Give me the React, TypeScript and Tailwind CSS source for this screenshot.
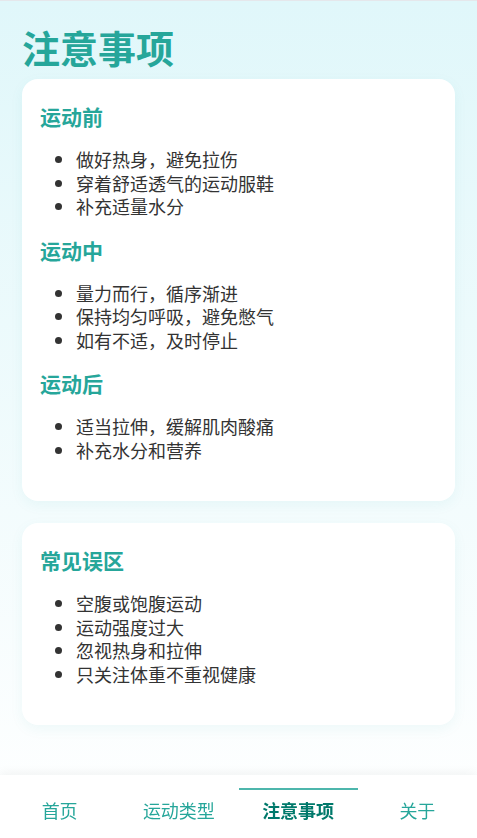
const sections = [
  {
    title: "运动前",
    items: ["做好热身，避免拉伤", "穿着舒适透气的运动服鞋", "补充适量水分"],
  },
  {
    title: "运动中",
    items: ["量力而行，循序渐进", "保持均匀呼吸，避免憋气", "如有不适，及时停止"],
  },
  {
    title: "运动后",
    items: ["适当拉伸，缓解肌肉酸痛", "补充水分和营养"],
  },
]

const mistakes = ["空腹或饱腹运动", "运动强度过大", "忽视热身和拉伸", "只关注体重不重视健康"]

const tabs = ["首页", "运动类型", "注意事项", "关于"]

function Section({ title, items }: { title: string; items: string[] }) {
  return (
    <div>
      <h3 className="text-[21px] font-bold leading-[30px] text-[#26a69a]">{title}</h3>
      <ul className="mt-[17px] mb-4 list-disc pl-9 text-[18px] leading-[23.5px] text-[#333]">
        {items.map((item) => (
          <li key={item}>{item}</li>
        ))}
      </ul>
    </div>
  )
}

export default function App() {
  return (
    <div
      className="min-h-screen border-t border-gray-200 bg-gradient-to-b from-[#e0f7fa] to-white pb-[80px]"
      style={{ fontFamily: '"Noto Sans CJK SC", "Noto Sans", sans-serif' }}
    >
      <div className="px-[22px] pt-[22px]">
        <h1 className="text-[38px] font-bold leading-[48px] text-[#26a69a]">注意事项</h1>

        <div className="mt-2 rounded-2xl bg-white px-[18px] pt-[22px] pb-[23px] shadow-[0_4px_14px_rgba(0,150,160,0.06)]">
          {sections.map((s) => (
            <Section key={s.title} title={s.title} items={s.items} />
          ))}
        </div>

        <div className="mt-[22px] rounded-2xl bg-white px-[18px] pt-[22px] pb-[23px] shadow-[0_4px_14px_rgba(0,150,160,0.06)]">
          <Section title="常见误区" items={mistakes} />
        </div>
      </div>

      <nav className="fixed bottom-0 left-0 right-0 flex h-[63px] items-start bg-white pt-[13px] shadow-[0_-2px_10px_rgba(0,0,0,0.05)]">
        {tabs.map((t) => {
          const active = t === "注意事项"
          return (
            <button
              key={t}
              className={`flex-1 border-t-2 pt-2 text-[18px] leading-6 ${
                active
                  ? "border-[#4db6ac] font-bold text-[#00796b]"
                  : "border-transparent text-[#26a69a]"
              }`}
            >
              {t}
            </button>
          )
        })}
      </nav>
    </div>
  )
}
